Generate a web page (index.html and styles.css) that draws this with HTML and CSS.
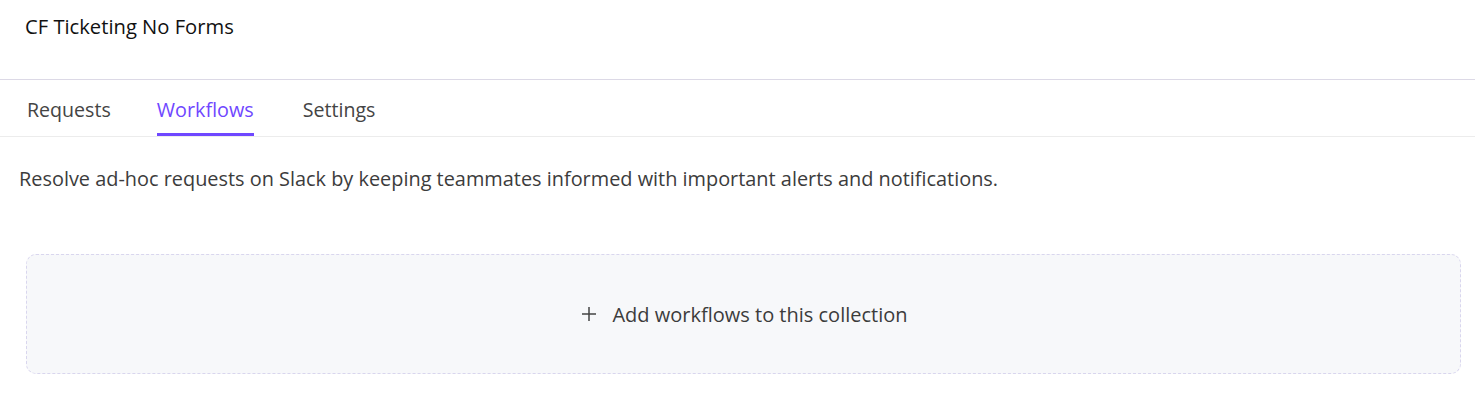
FILE: index.html
```html
<!DOCTYPE html>
<html>
<head>
<meta charset="utf-8">
<link rel="stylesheet" href="styles.css">
</head>
<body>
<header class="header">
  <h1 class="title">CF Ticketing No Forms</h1>
</header>
<nav class="tabs">
  <a class="tab">Requests</a>
  <a class="tab active">Workflows</a>
  <a class="tab">Settings</a>
</nav>
<p class="desc">Resolve ad-hoc requests on Slack by keeping teammates informed with important alerts and notifications.</p>
<div class="empty-wrap">
  <div class="empty">
    <svg class="plus" width="16" height="16" viewBox="0 0 16 16"><path d="M8 1v14M1 8h14" stroke="#444" stroke-width="1.5" fill="none"/></svg>
    <span>Add workflows to this collection</span>
  </div>
</div>
</body>
</html>
```
FILE: styles.css
```css
* { box-sizing: border-box; }
body {
  margin: 0;
  font-family: "Open Sans", sans-serif;
  background: #fff;
  color: #3c3c3c;
}
.header {
  height: 80px;
  border-bottom: 1px solid #dcd9e6;
  padding: 13px 25px 0;
}
.title {
  margin: 0;
  font-size: 20.2px;
  font-weight: 400;
  color: #111;
  line-height: 26px;
}
.tabs {
  display: flex;
  gap: 46px;
  padding: 0 27px;
  border-bottom: 1px solid #ececec;
  height: 57px;
}
.tab {
  display: flex;
  align-items: center;
  font-size: 19.6px;
  color: #444;
  border-bottom: 3px solid transparent;
  padding-top: 5px;
}
.tab.active {
  color: #6f47ff;
  border-bottom-color: #6f47ff;
  font-size: 19.8px;
  margin-right: 3px;
}
.desc {
  margin: 0;
  padding: 29px 19px 0;
  font-size: 19.9px;
  line-height: 26px;
  color: #3c3c3c;
}
.empty-wrap {
  padding: 62px 14px 0 26px;
}
.empty {
  height: 120px;
  border: 1px dashed #d9d6ee;
  border-radius: 10px;
  background: #f7f8fa;
  display: flex;
  align-items: center;
  justify-content: center;
  gap: 15px;
  font-size: 20px;
  color: #3c3c3c;
}
.plus { margin-left: 2px; }
```
